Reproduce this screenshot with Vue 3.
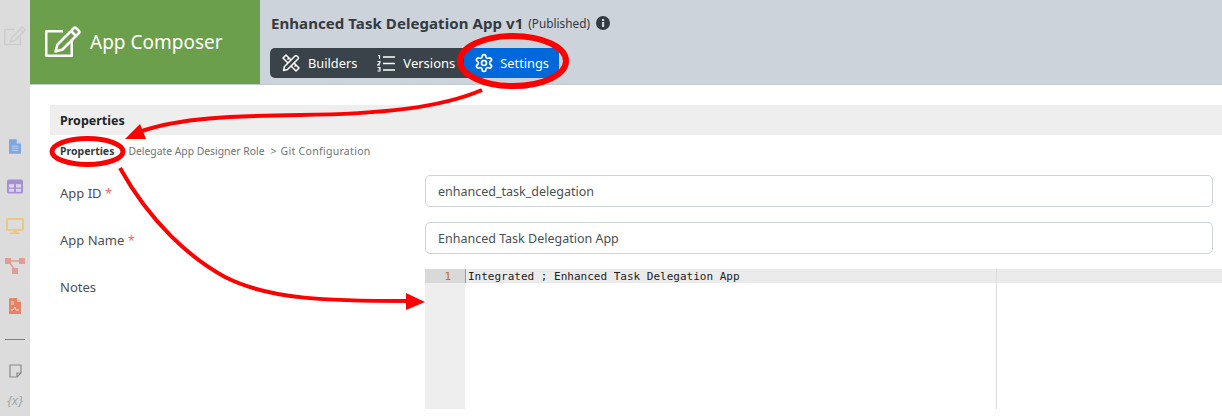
<template>
  <div class="page">
    <aside class="rail">
      <svg class="rail-top" width="22" height="20" viewBox="0 0 36 32" fill="none" stroke="#cdcdcd" stroke-width="2.500" stroke-linejoin="round"><path d="M26.750 15V29.750H1.250V5.250H18"/><path d="M10.500 25.500L12.500 18.500L29 2Q30 1 31 2L34 5Q35 6 34 7L17.500 23.500Z"/><path d="M26 5L31 10"/></svg>
      <div class="rail-icons">
        <svg class="ri" width="12" height="17" viewBox="0 0 14 17"><path d="M1 0h8l5 5v11a1 1 0 0 1-1 1H1a1 1 0 0 1-1-1V1a1 1 0 0 1 1-1z" fill="#7ea6e6"/><path d="M9 0l5 5H9z" fill="#c5d7f3"/><path d="M3 8h8M3 10.500h8M3 13h8" stroke="#c5d7f3"/></svg>
        <svg class="ri" width="16" height="15" viewBox="0 0 17 15"><rect width="17" height="15" rx="2" fill="#a48fd3"/><path d="M2 5h5.500v3.500H2zM9.500 5H15v3.500H9.500zM2 10h5.500v3H2zM9.500 10H15v3H9.500z" fill="#dcd6ea"/></svg>
        <svg class="ri" width="18" height="16" viewBox="0 0 18 16"><rect x="1" y="1" width="16" height="11" rx="1" fill="none" stroke="#ecc77c" stroke-width="2"/><path d="M7 13h4v1.500h3V16H4v-1.500h3z" fill="#ecc77c"/></svg>
        <svg class="ri" width="20" height="16" viewBox="0 0 20 16"><rect width="6" height="6" fill="#e59b94"/><rect width="6" height="6" x="14" fill="#e59b94"/><rect width="6" height="6" x="7" y="10" fill="#e59b94"/><path d="M6 3h8M5 5l4 6" stroke="#e59b94" stroke-width="1.500"/></svg>
        <svg class="ri" width="12" height="16" viewBox="0 0 12 16"><path d="M1 0h7l4 4v12H0V1a1 1 0 0 1 1-1z" fill="#e58369"/><path d="M8 0l4 4H8z" fill="#f2c6ba"/><path d="M2 12h2l2-3 1 3h3M2 4h3M2 6h3" stroke="#f6d9d0" fill="none"/></svg>
      </div>
      <hr class="rail-rule" />
      <svg class="note" width="13" height="14" viewBox="0 0 13 14" fill="none" stroke="#8a8a8a" stroke-width="1.200"><path d="M1 1h11v8l-4 4H1z"/><path d="M12 9H8v4"/></svg>
      <div class="vars">{x}</div>
    </aside>
    <div class="main">
      <header class="top">
        <div class="brand">
          <svg width="36" height="32" viewBox="0 0 36 32" fill="none" stroke="#fff" stroke-width="2.500" stroke-linejoin="round"><path d="M26.750 15V29.750H1.250V5.250H18"/><path d="M10.500 25.500L12.500 18.500L29 2Q30 1 31 2L34 5Q35 6 34 7L17.500 23.500Z"/><path d="M26 5L31 10"/></svg>
          <span class="brand-name">App Composer</span>
        </div>
        <div class="head">
          <div class="title-row">
            <strong class="title">Enhanced Task Delegation App v1</strong>
            <span class="status">(Published)</span>
            <svg class="info" width="14" height="14" viewBox="0 0 14 14"><circle cx="7" cy="7" r="7" fill="#343a40"/><rect x="6" y="6" width="2.200" height="5" fill="#ccd3db"/><rect x="6" y="3" width="2.200" height="2" fill="#ccd3db"/></svg>
          </div>
          <nav class="tabs">
            <a class="tab">
              <svg width="18" height="18" viewBox="0 0 18 18" fill="#3a424a" stroke="#fff" stroke-width="1.500" stroke-linejoin="round"><path d="M1 4L4 1L17 14L14 17Z"/><path d="M5.500 5.500l1.500-1.500M9 9l1.500-1.500M12.500 12.500l1.500-1.500" /><path d="M1.500 16.500L2.500 12.500L13 2Q14 1 15 2L16 3Q17 4 16 5L5.500 15.500Z"/></svg>
              <span>Builders</span>
            </a>
            <a class="tab">
              <svg width="18" height="18" viewBox="0 0 18 18" fill="none" stroke="#fff" stroke-width="1.600"><path d="M6 3h12M6 9.500h12M6 16h12"/><path d="M1 1.500h1.500v3.500M0.500 7.500h2.500v1.200L0.500 11H3M0.500 13.500H3v1.500H1.500M3 15v2H0.500" stroke-width="1.100"/></svg>
              <span>Versions</span>
            </a>
            <a class="tab active">
              <svg width="20" height="20" viewBox="0 0 24 24" fill="none" stroke="#fff" stroke-width="2" stroke-linejoin="round"><path d="M12.220 2h-.44a2 2 0 0 0-2 2v.18a2 2 0 0 1-1 1.730l-.43.25a2 2 0 0 1-2 0l-.15-.08a2 2 0 0 0-2.730.73l-.22.38a2 2 0 0 0 .73 2.730l.15.1a2 2 0 0 1 1 1.720v.51a2 2 0 0 1-1 1.740l-.15.09a2 2 0 0 0-.73 2.730l.22.38a2 2 0 0 0 2.730.73l.15-.08a2 2 0 0 1 2 0l.43.25a2 2 0 0 1 1 1.730V20a2 2 0 0 0 2 2h.44a2 2 0 0 0 2-2v-.18a2 2 0 0 1 1-1.730l.43-.25a2 2 0 0 1 2 0l.15.08a2 2 0 0 0 2.730-.73l.22-.39a2 2 0 0 0-.73-2.730l-.15-.08a2 2 0 0 1-1-1.740v-.5a2 2 0 0 1 1-1.740l.15-.09a2 2 0 0 0 .73-2.730l-.22-.38a2 2 0 0 0-2.730-.73l-.15.08a2 2 0 0 1-2 0l-.43-.25a2 2 0 0 1-1-1.730V4a2 2 0 0 0-2-2z"/><circle cx="12" cy="12" r="3"/></svg>
              <span>Settings</span>
            </a>
          </nav>
        </div>
      </header>
      <section class="content">
        <h2 class="section">Properties</h2>
        <div class="crumbs">
          <b>Properties</b>
          <span class="crumb">Delegate App Designer Role</span>
          <span class="sep">&gt;</span>
          <span class="crumb git">Git Configuration</span>
        </div>
        <div class="form">
          <label class="lab">App ID <i>*</i></label>
          <div class="input">enhanced_task_delegation</div>
          <label class="lab">App Name <i>*</i></label>
          <div class="input">Enhanced Task Delegation App</div>
          <label class="lab">Notes</label>
          <div class="editor">
            <div class="gutter"><div class="num">1</div></div>
            <div class="code">
              <div class="line">Integrated ; Enhanced Task Delegation App</div>
              <div class="margin"></div>
            </div>
          </div>
        </div>
      </section>
    </div>
    <svg class="marks" width="1222" height="416" viewBox="0 0 1222 416" fill="none" stroke="#f00">
      <ellipse cx="513" cy="61" rx="53" ry="25" stroke-width="6"/>
      <ellipse cx="87.500" cy="151.500" rx="35.500" ry="13" stroke-width="5"/>
      <path d="M482 90C440 108 380 114 300 115C230 116 180 118 142 131" stroke-width="4"/>
      <path d="M125 139L140 124L146 139z" fill="#f00" stroke="none"/>
      <path d="M120 168C150 222 190 258 225 277C270 300 330 301 408 301" stroke-width="4"/>
      <path d="M425 302L406 293V310z" fill="#f00" stroke="none"/>
    </svg>
  </div>
</template>

<script setup>
</script>

<style>
html, body { margin: 0; background: #fff; }
</style>

<style scoped>
.page {
  position: relative;
  display: flex;
  width: 1222px;
  height: 416px;
  overflow: hidden;
  font-family: "Noto Sans", "Open Sans", sans-serif;
  color: #343a40;
}
.rail {
  flex: 0 0 30px;
  background: #dcdcdc;
  display: flex;
  flex-direction: column;
  align-items: center;
}
.rail-top { margin-top: 26px; }
.rail-icons {
  margin-top: 92px;
  display: flex;
  flex-direction: column;
  align-items: center;
  gap: 24px;
}
.ri { display: block; }
.rail-rule {
  width: 20px;
  height: 1px;
  border: 0;
  background: #808080;
  margin: 25px 0 0;
}
.note { margin-top: 24px; }
.vars {
  margin-top: 14px;
  font-style: italic;
  font-size: 13px;
  line-height: 16px;
  color: #a5a5a5;
}
.main { flex: 1; min-width: 0; }
.top {
  display: flex;
  height: 84px;
  border-bottom: 1px solid #c4c9ce;
  background: #ccd3db;
}
.brand {
  flex: 0 0 230px;
  background: #6c9f4b;
  color: #fff;
  display: flex;
  align-items: center;
  gap: 9px;
  padding-left: 15px;
  box-sizing: border-box;
}
.brand-name { font-size: 19px; }
.head { padding: 13px 0 0 11px; }
.title-row {
  display: flex;
  align-items: center;
  height: 20px;
}
.title { font-size: 15px; font-weight: 700; letter-spacing: 0.070px; }
.status { font-size: 11.800px; margin-left: 5px; }
.info { margin-left: 6px; }
.tabs {
  display: inline-flex;
  height: 30px;
  margin: 15px 0 0 -1px;
  padding-left: 12px;
  border-radius: 5px;
  background: #3a424a;
}
.tab {
  display: flex;
  align-items: center;
  gap: 8px;
  margin-right: 20px;
  color: #fff;
  font-size: 12.800px;
  white-space: nowrap;
}
.tab:nth-child(2) { margin-right: 9px; font-size: 13px; }
.tab.active {
  margin-right: 0;
  gap: 6px;
  padding: 0 10px;
  background: #0069d9;
  border-radius: 5px;
}
.section {
  margin: 20px 0 0 20px;
  height: 30px;
  line-height: 31px;
  padding-left: 10px;
  background: #eeeeee;
  color: #212529;
  font-size: 12.500px;
  font-weight: 700;
}
.content { display: block; }
.crumbs {
  display: flex;
  align-items: center;
  height: 32px;
  padding-left: 30px;
  font-size: 10.500px;
  color: #6c757d;
}
.crumbs b { color: #343a40; margin-right: 14px; }
.sep { margin: 0 4px 0 6px; }
.crumb:not(.git) { font-size: 10.350px; }
.git { letter-spacing: 0.300px; }
.form {
  display: grid;
  grid-template-columns: 365px 788px;
  grid-template-rows: 32px 32px auto;
  row-gap: 15px;
  margin: 8px 0 0 30px;
}
.lab { font-size: 13px; line-height: 20px; padding-top: 8px; color: #495057; }
.lab i { color: #ef6a6a; font-style: normal; }
.input {
  box-sizing: border-box;
  height: 32px;
  line-height: 30px;
  padding: 1px 0 0 12px;
  border: 1px solid #ced4da;
  border-radius: 5px;
  font-size: 12.500px;
  color: #495057;
}
.editor {
  display: flex;
  width: 797px;
  height: 140px;
}
.gutter { flex: 0 0 40px; background: #eeeeee; }
.num {
  height: 14px;
  line-height: 15px;
  background: #d9d9d9;
  padding-right: 14px;
  text-align: right;
  font-family: "DejaVu Sans Mono", monospace;
  font-size: 11px;
  color: #b5760f;
}
.code { position: relative; flex: 1; }
.line {
  height: 14px;
  line-height: 15px;
  background: #ebebeb;
  padding-left: 2px;
  border-left: 1px solid #999;
  font-family: "DejaVu Sans Mono", monospace;
  font-size: 11px;
  color: #222;
  white-space: pre;
}
.margin {
  position: absolute;
  top: 0;
  bottom: 0;
  left: 531px;
  width: 1px;
  background: #dedede;
}
.marks {
  position: absolute;
  top: 0;
  left: 0;
  pointer-events: none;
}
</style>
